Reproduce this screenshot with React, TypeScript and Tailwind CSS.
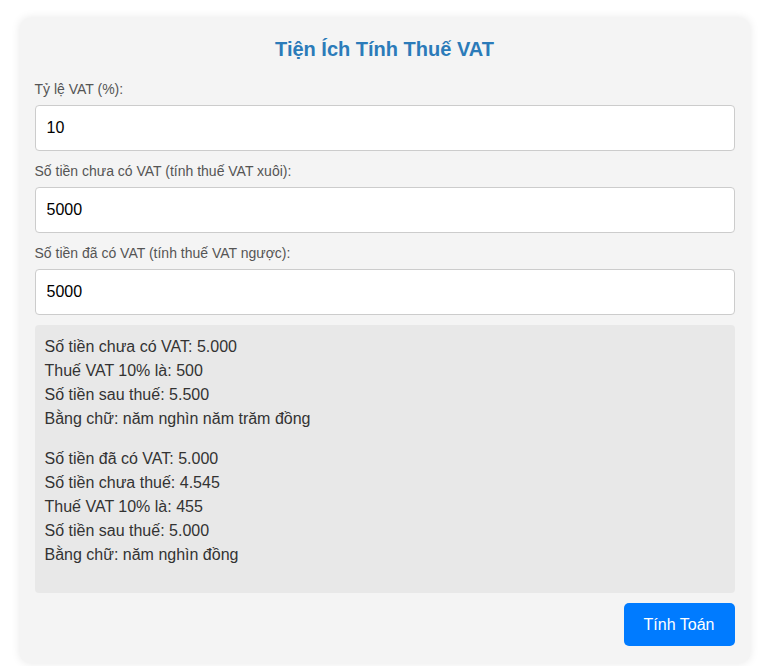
import React, { useState } from 'react'

const App = () => {
  const [rate, setRate] = useState('10')
  const [net, setNet] = useState('5000')
  const [gross, setGross] = useState('5000')

  return (
    <div className="min-h-[666px] bg-white pt-[18px] font-['Liberation_Sans',Arial,sans-serif]">
      <div className="mx-auto max-w-[730px] rounded-[10px] bg-[#f4f4f4] px-[15px] pt-[18px] pb-[17px] shadow-[0_0_10px_rgba(0,0,0,0.1)]">
        <h2 className="mb-[19px] text-center text-[20px] font-bold leading-[26px] text-[#2b7bb9]">Tiện Ích Tính Thuế VAT</h2>

        <label className="mb-[8px] block text-[14px] leading-[16px] text-[#555]">Tỷ lệ VAT (%):</label>
        <input
          value={rate}
          onChange={(e) => setRate(e.target.value)}
          className="mb-[12px] block h-[46px] w-full rounded-[4px] border border-[#ccc] bg-white px-[11px] text-[16px] text-black outline-none"
        />

        <label className="mb-[8px] block text-[14px] leading-[16px] text-[#555]">Số tiền chưa có VAT (tính thuế VAT xuôi):</label>
        <input
          value={net}
          onChange={(e) => setNet(e.target.value)}
          className="mb-[12px] block h-[46px] w-full rounded-[4px] border border-[#ccc] bg-white px-[11px] text-[16px] text-black outline-none"
        />

        <label className="mb-[8px] block text-[14px] leading-[16px] text-[#555]">Số tiền đã có VAT (tính thuế VAT ngược):</label>
        <input
          value={gross}
          onChange={(e) => setGross(e.target.value)}
          className="mb-[10px] block h-[46px] w-full rounded-[4px] border border-[#ccc] bg-white px-[11px] text-[16px] text-black outline-none"
        />

        <div className="mb-[10px] h-[268px] rounded-[4px] bg-[#e8e8e8] px-[10px] pt-[10px] text-[16px] leading-[24px] text-[#333]">
          <p className="mb-[16px]">
            Số tiền chưa có VAT: 5.000<br />
            Thuế VAT 10% là: 500<br />
            Số tiền sau thuế: 5.500<br />
            Bằng chữ: năm nghìn năm trăm đồng
          </p>
          <p>
            Số tiền đã có VAT: 5.000<br />
            Số tiền chưa thuế: 4.545<br />
            Thuế VAT 10% là: 455<br />
            Số tiền sau thuế: 5.000<br />
            Bằng chữ: năm nghìn đồng
          </p>
        </div>

        <div className="flex justify-end">
          <button className="h-[43px] w-[111px] rounded-[5px] bg-[#007bff] text-[16px] text-white">Tính Toán</button>
        </div>
      </div>
    </div>
  )
}

export default App
